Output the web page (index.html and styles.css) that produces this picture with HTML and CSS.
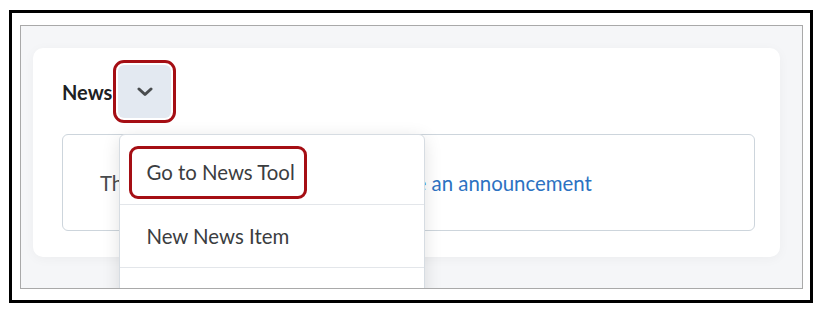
FILE: index.html
```html
<!DOCTYPE html>
<html lang="en">
<head>
    <meta charset="UTF-8">
    <title>News widget</title>
    <link rel="stylesheet" href="styles.css">
</head>
<body>
    <div class="frame">
        <div class="shot">
            <div class="card">
                <div class="card-head">
                    <h2 class="title">News</h2>
                    <div class="menu-wrap">
                        <button class="opener" type="button" aria-label="Actions for News">
                            <svg width="16" height="10" viewBox="0 0 16 10"><path d="M2 2 L8 7.5 L14 2" fill="none" stroke="#494c4e" stroke-width="3" stroke-linecap="round" stroke-linejoin="round"/></svg>
                        </button>
                        <ul class="menu">
                            <li class="menu-item"><span class="item-mark">Go to News Tool</span></li>
                            <li class="menu-item">New News Item</li>
                            <li class="menu-item"></li>
                        </ul>
                    </div>
                </div>
                <div class="empty">
                    There are no items to display. <a href="#">Create an announcement</a>
                </div>
            </div>
        </div>
    </div>
</body>
</html>
```

FILE: styles.css
```css
body {
    margin: 0;
    background-color: #fff;
    font-family: Lato, "Open Sans", sans-serif;
    color: #202122;
}
.frame {
    width: 783px;
    height: 266px;
    margin: 10px 0 0 9px;
    border: 3px solid #000;
    padding: 12px 7px 9px 8px;
}
.shot {
    height: 264px;
    box-sizing: border-box;
    border: 1px solid #a9a9a9;
    background-color: #f5f6f8;
    overflow: hidden;
    padding: 22px 22px 0 12px;
}
.card {
    background-color: #fff;
    border-radius: 10px;
    box-shadow: 0 2px 12px rgba(0,0,0,0.04);
    height: 209px;
    padding: 17px 25px 0 29px;
    box-sizing: border-box;
}
.card-head {
    display: flex;
    align-items: center;
    gap: 6px;
    height: 53px;
}
.title {
    margin: 0;
    font-size: 20px;
    font-weight: 700;
    color: #202122;
}
.menu-wrap {
    position: relative;
}
.opener {
    width: 53px;
    height: 53px;
    border: none;
    border-radius: 6px;
    background-color: #e3e9f1;
    display: flex;
    align-items: center;
    justify-content: center;
    padding: 0;
    outline: 3px solid #a50e14;
    outline-offset: 2px;
}
.menu {
    position: absolute;
    left: 1px;
    top: 69px;
    width: 304px;
    margin: 0;
    padding: 7px 0 0;
    list-style: none;
    background-color: #fff;
    border: 1px solid #d6dce2;
    border-radius: 6px;
    box-shadow: 0 4px 18px rgba(0,0,0,0.12);
    z-index: 2;
}
.menu-item {
    height: 62px;
    display: flex;
    align-items: center;
    padding-left: 26px;
    font-size: 20.4px;
    color: #3b3d3f;
    border-bottom: 1px solid #e3e6ea;
}
.item-mark {
    display: flex;
    align-items: center;
    height: 47px;
    margin-left: -17px;
    margin-top: -2px;
    padding: 0 9px 0 14px;
    border: 3px solid #a50e14;
    border-radius: 9px;
}
.empty {
    margin-top: 16px;
    height: 97px;
    box-sizing: border-box;
    border: 1px solid #cdd5dc;
    border-radius: 6px;
    display: flex;
    align-items: center;
    padding-left: 37px;
    font-size: 20.4px;
    color: #494c4e;
}
.empty a {
    color: #2c72c2;
    text-decoration: none;
    margin-left: 5px;
}
```
